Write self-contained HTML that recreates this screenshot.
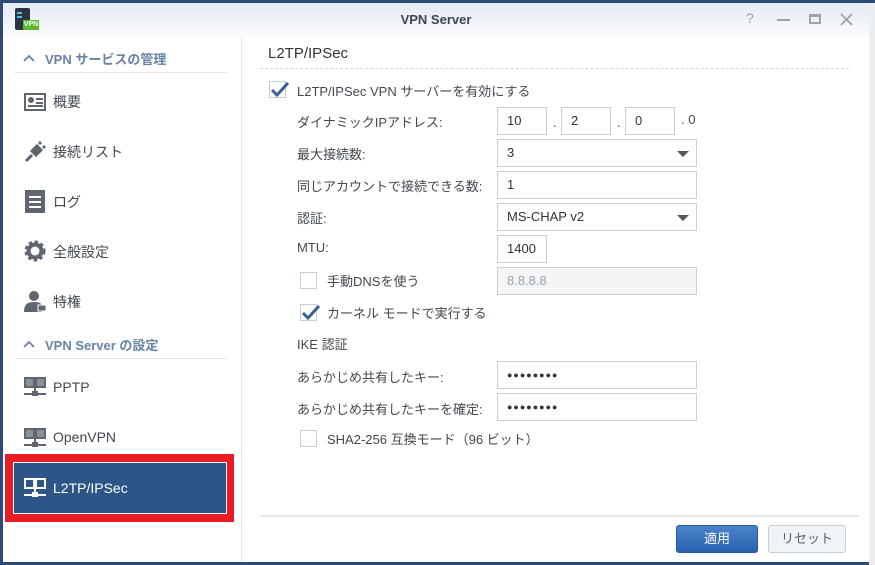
<!DOCTYPE html>
<html><head><meta charset="utf-8"><style>
*{margin:0;padding:0;box-sizing:border-box}
body{width:875px;height:565px;overflow:hidden;background:#2c4a75;font-family:"Liberation Sans","Noto Sans CJK JP",sans-serif;font-size:13px;color:#404850;position:relative}
.a{position:absolute}
.win{left:3px;top:3px;width:866px;height:559px;background:#fff}
.title{left:3px;top:3px;width:866px;height:34px;background:linear-gradient(#e3eaf2,#fbfcfd);text-align:center;line-height:34px;font-weight:bold;font-size:13px;color:#3c4654}
.side{left:3px;top:37px;width:239px;height:525px;background:#fff;border-right:1px solid #dfe3e8}
.hd{color:#6783a6;font-weight:bold;font-size:13px}
.ln{height:1px;background:#e1e6ec}
.it{font-size:14px;color:#404850}
.inp{border:1px solid #c6ced8;height:28px;background:#fff;padding-left:9px;line-height:26px;color:#333}
.lbl{color:#404850}
.cb{width:17px;height:17px;border:1px solid #c6ced8;background:#fff}
.ck{width:17px;height:17px;border:1px solid #c6ced8;background:#fff}
.ck svg{position:absolute;left:0;top:-3px}
.tri{width:0;height:0;border-left:6px solid transparent;border-right:6px solid transparent;border-top:6px solid #505860}
.pw{font-size:9px;letter-spacing:1px}
</style></head><body>
<div class="a" style="left:0;top:0;width:875px;height:3px;background:#2c4a75"></div>
<div class="a" style="left:869px;top:3px;width:6px;height:562px;background:#eceff2"></div>
<div class="a win"></div>
<div class="a title">VPN Server</div>
<div class="a" style="left:15px;top:8px;width:15px;height:22px;background:#2b3440;border-radius:2px"></div>
<div class="a" style="left:17px;top:12px;width:5px;height:2px;background:#4ec0f0"></div>
<div class="a" style="left:17px;top:16px;width:5px;height:2px;background:#4ec0f0"></div>
<div class="a" style="left:23px;top:20px;width:16px;height:10px;background:#5cb82e;color:#fff;font-size:7px;font-weight:bold;line-height:10px;text-align:center">VPN</div>
<div class="a" style="left:746px;top:10px;color:#9aa2ac;font-size:14px">?</div>
<div class="a" style="left:777px;top:19px;width:13px;height:2px;background:#9aa2ac"></div>
<div class="a" style="left:809px;top:14px;width:12px;height:10px;border:2px solid #9aa2ac;border-top-width:3px"></div>
<svg class="a" style="left:840px;top:13px" width="13" height="13"><path d="M1 1L12 12M12 1L1 12" stroke="#9aa2ac" stroke-width="1.8"/></svg>

<div class="a side"></div>
<svg class="a" style="left:23px;top:54px" width="12" height="8"><path d="M1 7L6 2L11 7" stroke="#6783a6" stroke-width="1.8" fill="none"/></svg>
<div class="a hd" style="left:45px;top:49px">VPN サービスの管理</div>
<div class="a ln" style="left:15px;top:72px;width:212px"></div>

<div class="a" style="left:24px;top:93px;width:22px;height:18px;border:2px solid #5f6670;background:#fff"></div>
<div class="a" style="left:28px;top:97px;width:6px;height:6px;background:#5f6670;border-radius:3px"></div>
<div class="a" style="left:36px;top:98px;width:7px;height:2px;background:#5f6670"></div>
<div class="a" style="left:36px;top:102px;width:7px;height:2px;background:#5f6670"></div>
<div class="a" style="left:28px;top:105px;width:15px;height:2px;background:#5f6670"></div>
<div class="a it" style="left:53px;top:92px">概要</div>

<svg class="a" style="left:24px;top:141px" width="22" height="22"><path d="M2 20L8 14M8 10l4 4 5-5-4-4zM15 3l2-2M19 7l2-2" stroke="#5f6670" stroke-width="3" fill="#5f6670"/></svg>
<div class="a it" style="left:53px;top:142px">接続リスト</div>

<div class="a" style="left:25px;top:190px;width:20px;height:23px;background:#5f6670"></div>
<div class="a" style="left:29px;top:196px;width:12px;height:2px;background:#fff"></div>
<div class="a" style="left:29px;top:201px;width:12px;height:2px;background:#fff"></div>
<div class="a" style="left:29px;top:206px;width:12px;height:2px;background:#fff"></div>
<div class="a it" style="left:53px;top:192px">ログ</div>

<svg class="a" style="left:24px;top:240px" width="22" height="22"><circle cx="11" cy="11" r="8" fill="none" stroke="#5f6670" stroke-width="5" stroke-dasharray="3 2.3"/><circle cx="11" cy="11" r="6.5" fill="none" stroke="#5f6670" stroke-width="4"/></svg>
<div class="a it" style="left:53px;top:242px">全般設定</div>

<svg class="a" style="left:24px;top:290px" width="22" height="22"><circle cx="10" cy="6" r="5" fill="#5f6670"/><path d="M0 22C0 14 4 12 10 12S18 14 18 16V22Z" fill="#5f6670"/><rect x="14" y="15" width="8" height="6" fill="#5f6670" stroke="#fff"/></svg>
<div class="a it" style="left:53px;top:292px">特権</div>

<svg class="a" style="left:23px;top:340px" width="12" height="8"><path d="M1 7L6 2L11 7" stroke="#6783a6" stroke-width="1.8" fill="none"/></svg>
<div class="a hd" style="left:45px;top:335px">VPN Server の設定</div>
<div class="a ln" style="left:15px;top:358px;width:212px"></div>

<svg class="a" style="left:24px;top:377px" width="22" height="20"><rect x="1" y="1" width="9" height="9" fill="#8a9098" stroke="#5f6670" stroke-width="2"/><rect x="12" y="1" width="9" height="9" fill="#8a9098" stroke="#5f6670" stroke-width="2"/><path d="M11 11V16M0 17H22" stroke="#5f6670" stroke-width="2"/><rect x="8" y="14" width="6" height="5" fill="#5f6670"/></svg>
<div class="a it" style="left:53px;top:379px">PPTP</div>
<svg class="a" style="left:24px;top:428px" width="22" height="20"><rect x="1" y="1" width="9" height="9" fill="#8a9098" stroke="#5f6670" stroke-width="2"/><rect x="12" y="1" width="9" height="9" fill="#8a9098" stroke="#5f6670" stroke-width="2"/><path d="M11 11V16M0 17H22" stroke="#5f6670" stroke-width="2"/><rect x="8" y="14" width="6" height="5" fill="#5f6670"/></svg>
<div class="a it" style="left:53px;top:429px">OpenVPN</div>

<div class="a" style="left:5px;top:454px;width:229px;height:68px;background:#e81c24"></div>
<div class="a" style="left:13px;top:462px;width:214px;height:52px;background:#2d5687;border:1px solid #fff"></div>
<svg class="a" style="left:24px;top:478px" width="22" height="20"><rect x="1" y="1" width="9" height="9" fill="#2d5687" stroke="#fff" stroke-width="2"/><rect x="12" y="1" width="9" height="9" fill="#2d5687" stroke="#fff" stroke-width="2"/><path d="M11 11V16M0 17H22" stroke="#fff" stroke-width="2"/><rect x="8" y="14" width="6" height="5" fill="#fff"/></svg>
<div class="a it" style="left:53px;top:480px;color:#fff">L2TP/IPSec</div>

<div class="a" style="left:268px;top:45px;font-size:15px;color:#333">L2TP/IPSec</div>
<div class="a" style="left:260px;top:68px;width:589px;border-top:1px dashed #cfd8e3"></div>

<div class="a ck" style="left:269px;top:81px"><svg width="20" height="20"><path d="M2 11L7 16L18 4" stroke="#3a5f93" stroke-width="3" fill="none"/></svg></div>
<div class="a lbl" style="left:297px;top:81px">L2TP/IPSec VPN サーバーを有効にする</div>

<div class="a lbl" style="left:297px;top:112px">ダイナミックIPアドレス:</div>
<div class="a inp" style="left:497px;top:107px;width:50px">10</div>
<div class="a" style="left:553px;top:115px">.</div>
<div class="a inp" style="left:561px;top:107px;width:50px">2</div>
<div class="a" style="left:617px;top:115px">.</div>
<div class="a inp" style="left:625px;top:107px;width:50px">0</div>
<div class="a" style="left:681px;top:112px">. 0</div>

<div class="a lbl" style="left:297px;top:144px">最大接続数:</div>
<div class="a inp" style="left:497px;top:139px;width:200px">3</div>
<div class="a tri" style="left:677px;top:151px"></div>

<div class="a lbl" style="left:297px;top:176px">同じアカウントで接続できる数:</div>
<div class="a inp" style="left:497px;top:171px;width:200px">1</div>

<div class="a lbl" style="left:297px;top:208px">認証:</div>
<div class="a inp" style="left:497px;top:203px;width:200px">MS-CHAP v2</div>
<div class="a tri" style="left:677px;top:215px"></div>

<div class="a lbl" style="left:297px;top:240px">MTU:</div>
<div class="a inp" style="left:497px;top:235px;width:50px">1400</div>

<div class="a cb" style="left:300px;top:272px"></div>
<div class="a lbl" style="left:327px;top:271px">手動DNSを使う</div>
<div class="a inp" style="left:497px;top:267px;width:200px;background:#f3f5f7;color:#9aa2ac">8.8.8.8</div>

<div class="a ck" style="left:300px;top:304px"><svg width="20" height="20"><path d="M2 11L7 16L18 4" stroke="#3a5f93" stroke-width="3" fill="none"/></svg></div>
<div class="a lbl" style="left:327px;top:303px">カーネル モードで実行する</div>

<div class="a lbl" style="left:297px;top:334px">IKE 認証</div>

<div class="a lbl" style="left:297px;top:367px">あらかじめ共有したキー:</div>
<div class="a inp pw" style="left:497px;top:361px;width:200px">●●●●●●●●</div>
<div class="a lbl" style="left:297px;top:399px">あらかじめ共有したキーを確定:</div>
<div class="a inp pw" style="left:497px;top:393px;width:200px">●●●●●●●●</div>

<div class="a cb" style="left:300px;top:430px"></div>
<div class="a lbl" style="left:327px;top:429px">SHA2-256 互換モード（96 ビット）</div>

<div class="a" style="left:260px;top:515px;width:599px;height:2px;background:#e6e9ec"></div>
<div class="a" style="left:676px;top:525px;width:82px;height:28px;background:linear-gradient(#4a82cc,#2c62ad);border:1px solid #2a5a9c;border-radius:3px;color:#fff;text-align:center;line-height:26px">適用</div>
<div class="a" style="left:768px;top:525px;width:78px;height:28px;background:#f0f4f8;border:1px solid #c6ced8;border-radius:3px;color:#555e68;text-align:center;line-height:26px">リセット</div>
</body></html>
